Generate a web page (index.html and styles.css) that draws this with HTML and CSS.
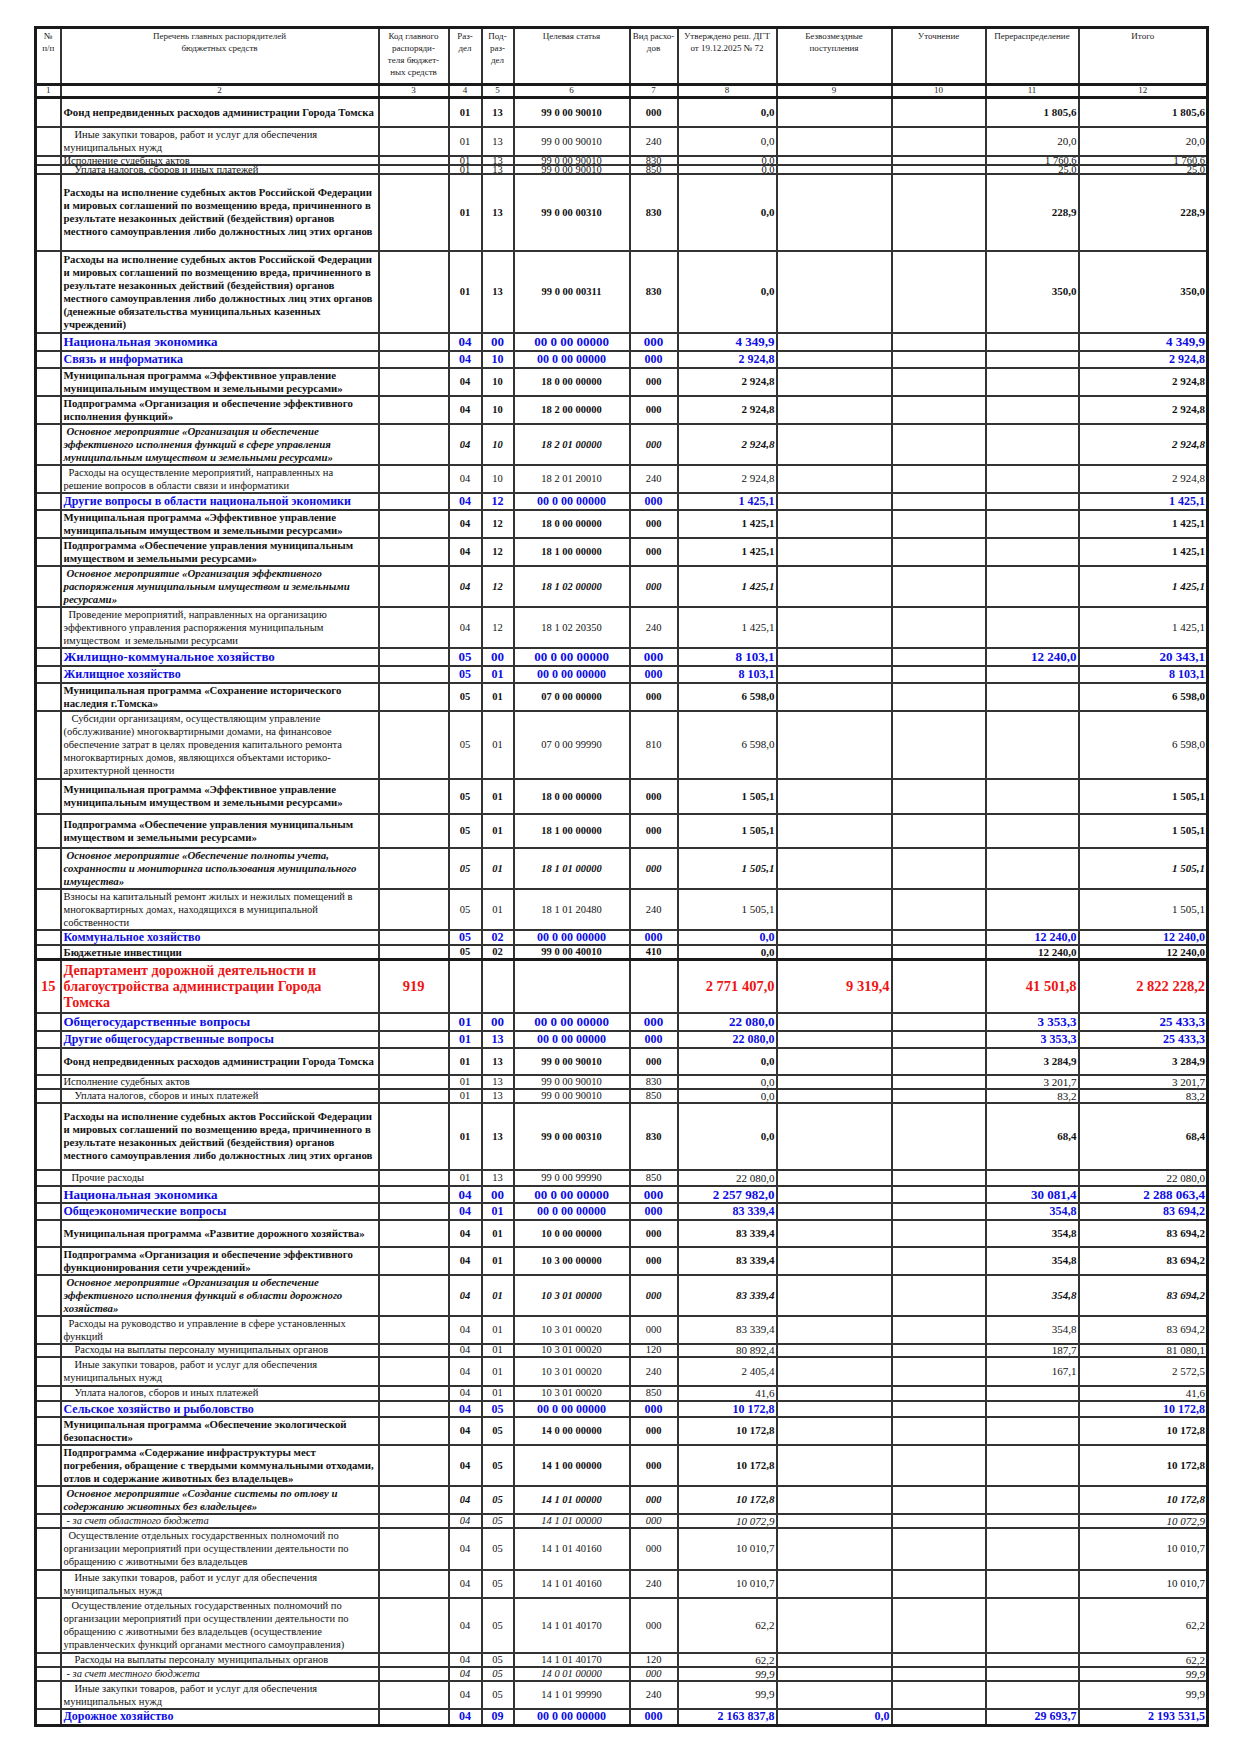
FILE: index.html
```html
<!DOCTYPE html>
<html lang="ru">
<head>
<meta charset="utf-8">
<title>Ведомственная структура расходов</title>
<link rel="stylesheet" href="styles.css">
</head>
<body>
<table class="budget">
<colgroup>
<col class="c1"><col class="c2"><col class="c3"><col class="c4"><col class="c5"><col class="c6"><col class="c7"><col class="c8"><col class="c9"><col class="c10"><col class="c11"><col class="c12">
</colgroup>
<thead>
<tr class="head">
<th>№<br>п/п</th>
<th>Перечень главных распорядителей<br>бюджетных средств</th>
<th>Код главного<br>распоряди-<br>теля бюджет-<br>ных средств</th>
<th>Раз-<br>дел</th>
<th>Под-<br>раз-<br>дел</th>
<th>Целевая статья</th>
<th>Вид расхо-<br>дов</th>
<th>Утверждено реш. ДГТ<br>от 19.12.2025 № 72</th>
<th>Безвозмездные<br>поступления</th>
<th>Уточнение</th>
<th>Перераспределение</th>
<th>Итого</th>
</tr>
<tr class="nums">
<th>1</th><th>2</th><th>3</th><th>4</th><th>5</th><th>6</th><th>7</th><th>8</th><th>9</th><th>10</th><th>11</th><th>12</th>
</tr>
</thead>
<tbody>
<tr class="b h29"><td></td><td>Фонд непредвиденных расходов администрации Города Томска</td><td></td><td>01</td><td>13</td><td>99 0 00 90010</td><td>000</td><td>0,0</td><td></td><td></td><td>1 805,6</td><td>1 805,6</td></tr>
<tr class="h29"><td></td><td class="i3">Иные закупки товаров, работ и услуг для обеспечения<br>муниципальных нужд</td><td></td><td>01</td><td>13</td><td>99 0 00 90010</td><td>240</td><td>0,0</td><td></td><td></td><td>20,0</td><td>20,0</td></tr>
<tr class="h9"><td></td><td>Исполнение судебных актов</td><td></td><td>01</td><td>13</td><td>99 0 00 90010</td><td>830</td><td>0,0</td><td></td><td></td><td>1 760,6</td><td>1 760,6</td></tr>
<tr class="h9"><td></td><td class="i3">Уплата налогов, сборов и иных платежей</td><td></td><td>01</td><td>13</td><td>99 0 00 90010</td><td>850</td><td>0,0</td><td></td><td></td><td>25,0</td><td>25,0</td></tr>
<tr class="b h77"><td></td><td>Расходы на исполнение судебных актов Российской Федерации<br>и мировых соглашений по возмещению вреда, причиненного в<br>результате незаконных действий (бездействия) органов<br>местного самоуправления либо должностных лиц этих органов</td><td></td><td>01</td><td>13</td><td>99 0 00 00310</td><td>830</td><td>0,0</td><td></td><td></td><td>228,9</td><td>228,9</td></tr>
<tr class="b h82"><td></td><td>Расходы на исполнение судебных актов Российской Федерации<br>и мировых соглашений по возмещению вреда, причиненного в<br>результате незаконных действий (бездействия) органов<br>местного самоуправления либо должностных лиц этих органов<br>(денежные обязательства муниципальных казенных<br>учреждений)</td><td></td><td>01</td><td>13</td><td>99 0 00 00311</td><td>830</td><td>0,0</td><td></td><td></td><td>350,0</td><td>350,0</td></tr>
<tr class="blue big h18"><td></td><td>Национальная экономика</td><td></td><td>04</td><td>00</td><td>00 0 00 00000</td><td>000</td><td>4 349,9</td><td></td><td></td><td></td><td>4 349,9</td></tr>
<tr class="blue h17"><td></td><td>Связь и информатика</td><td></td><td>04</td><td>10</td><td>00 0 00 00000</td><td>000</td><td>2 924,8</td><td></td><td></td><td></td><td>2 924,8</td></tr>
<tr class="b h28"><td></td><td>Муниципальная программа «Эффективное управление<br>муниципальным имуществом и земельными ресурсами»</td><td></td><td>04</td><td>10</td><td>18 0 00 00000</td><td>000</td><td>2 924,8</td><td></td><td></td><td></td><td>2 924,8</td></tr>
<tr class="b h27"><td></td><td>Подпрограмма «Организация и обеспечение эффективного<br>исполнения функций»</td><td></td><td>04</td><td>10</td><td>18 2 00 00000</td><td>000</td><td>2 924,8</td><td></td><td></td><td></td><td>2 924,8</td></tr>
<tr class="bi h41"><td></td><td class="i1">Основное мероприятие «Организация и обеспечение<br>эффективного исполнения функций в сфере управления<br>муниципальным имуществом и земельными ресурсами»</td><td></td><td>04</td><td>10</td><td>18 2 01 00000</td><td>000</td><td>2 924,8</td><td></td><td></td><td></td><td>2 924,8</td></tr>
<tr class="h27"><td></td><td class="i2">Расходы на осуществление мероприятий, направленных на<br>решение вопросов в области связи и информатики</td><td></td><td>04</td><td>10</td><td>18 2 01 20010</td><td>240</td><td>2 924,8</td><td></td><td></td><td></td><td>2 924,8</td></tr>
<tr class="blue h17"><td></td><td>Другие вопросы в области национальной экономики</td><td></td><td>04</td><td>12</td><td>00 0 00 00000</td><td>000</td><td>1 425,1</td><td></td><td></td><td></td><td>1 425,1</td></tr>
<tr class="b h28"><td></td><td>Муниципальная программа «Эффективное управление<br>муниципальным имуществом и земельными ресурсами»</td><td></td><td>04</td><td>12</td><td>18 0 00 00000</td><td>000</td><td>1 425,1</td><td></td><td></td><td></td><td>1 425,1</td></tr>
<tr class="b h27"><td></td><td>Подпрограмма «Обеспечение управления муниципальным<br>имуществом и земельными ресурсами»</td><td></td><td>04</td><td>12</td><td>18 1 00 00000</td><td>000</td><td>1 425,1</td><td></td><td></td><td></td><td>1 425,1</td></tr>
<tr class="bi h41"><td></td><td class="i1">Основное мероприятие «Организация эффективного<br>распоряжения муниципальным имуществом и земельными<br>ресурсами»</td><td></td><td>04</td><td>12</td><td>18 1 02 00000</td><td>000</td><td>1 425,1</td><td></td><td></td><td></td><td>1 425,1</td></tr>
<tr class="h41"><td></td><td class="i2">Проведение мероприятий, направленных на организацию<br>эффективного управления распоряжения муниципальным<br>имуществом &nbsp;и земельными ресурсами</td><td></td><td>04</td><td>12</td><td>18 1 02 20350</td><td>240</td><td>1 425,1</td><td></td><td></td><td></td><td>1 425,1</td></tr>
<tr class="blue big h18"><td></td><td>Жилищно-коммунальное хозяйство</td><td></td><td>05</td><td>00</td><td>00 0 00 00000</td><td>000</td><td>8 103,1</td><td></td><td></td><td>12 240,0</td><td>20 343,1</td></tr>
<tr class="blue h17"><td></td><td>Жилищное хозяйство</td><td></td><td>05</td><td>01</td><td>00 0 00 00000</td><td>000</td><td>8 103,1</td><td></td><td></td><td></td><td>8 103,1</td></tr>
<tr class="b h27"><td></td><td>Муниципальная программа «Сохранение исторического<br>наследия г.Томска»</td><td></td><td>05</td><td>01</td><td>07 0 00 00000</td><td>000</td><td>6 598,0</td><td></td><td></td><td></td><td>6 598,0</td></tr>
<tr class="h68"><td></td><td class="i25">Субсидии организациям, осуществляющим управление<br>(обслуживание) многоквартирными домами, на финансовое<br>обеспечение затрат в целях проведения капитального ремонта<br>многоквартирных домов, являющихся объектами историко-<br>архитектурной ценности</td><td></td><td>05</td><td>01</td><td>07 0 00 99990</td><td>810</td><td>6 598,0</td><td></td><td></td><td></td><td>6 598,0</td></tr>
<tr class="b h35"><td></td><td>Муниципальная программа «Эффективное управление<br>муниципальным имуществом и земельными ресурсами»</td><td></td><td>05</td><td>01</td><td>18 0 00 00000</td><td>000</td><td>1 505,1</td><td></td><td></td><td></td><td>1 505,1</td></tr>
<tr class="b h34"><td></td><td>Подпрограмма «Обеспечение управления муниципальным<br>имуществом и земельными ресурсами»</td><td></td><td>05</td><td>01</td><td>18 1 00 00000</td><td>000</td><td>1 505,1</td><td></td><td></td><td></td><td>1 505,1</td></tr>
<tr class="bi h40"><td></td><td class="i1">Основное мероприятие «Обеспечение полноты учета,<br>сохранности и мониторинга использования муниципального<br>имущества»</td><td></td><td>05</td><td>01</td><td>18 1 01 00000</td><td>000</td><td>1 505,1</td><td></td><td></td><td></td><td>1 505,1</td></tr>
<tr class="h41"><td></td><td>Взносы на капитальный ремонт жилых и нежилых помещений в<br>многоквартирных домах, находящихся в муниципальной<br>собственности</td><td></td><td>05</td><td>01</td><td>18 1 01 20480</td><td>240</td><td>1 505,1</td><td></td><td></td><td></td><td>1 505,1</td></tr>
<tr class="blue h15"><td></td><td>Коммунальное хозяйство</td><td></td><td>05</td><td>02</td><td>00 0 00 00000</td><td>000</td><td>0,0</td><td></td><td></td><td>12 240,0</td><td>12 240,0</td></tr>
<tr class="b h15"><td></td><td>Бюджетные инвестиции</td><td></td><td>05</td><td>02</td><td>99 0 00 40010</td><td>410</td><td>0,0</td><td></td><td></td><td>12 240,0</td><td>12 240,0</td></tr>
<tr class="red dept h53"><td>15</td><td>Департамент дорожной деятельности и<br>благоустройства администрации Города<br>Томска</td><td>919</td><td></td><td></td><td></td><td></td><td>2 771 407,0</td><td>9 319,4</td><td></td><td>41 501,8</td><td>2 822 228,2</td></tr>
<tr class="blue big h18"><td></td><td>Общегосударственные вопросы</td><td></td><td>01</td><td>00</td><td>00 0 00 00000</td><td>000</td><td>22 080,0</td><td></td><td></td><td>3 353,3</td><td>25 433,3</td></tr>
<tr class="blue h17"><td></td><td>Другие общегосударственные вопросы</td><td></td><td>01</td><td>13</td><td>00 0 00 00000</td><td>000</td><td>22 080,0</td><td></td><td></td><td>3 353,3</td><td>25 433,3</td></tr>
<tr class="b h27"><td></td><td>Фонд непредвиденных расходов администрации Города Томска</td><td></td><td>01</td><td>13</td><td>99 0 00 90010</td><td>000</td><td>0,0</td><td></td><td></td><td>3 284,9</td><td>3 284,9</td></tr>
<tr class="h14"><td></td><td>Исполнение судебных актов</td><td></td><td>01</td><td>13</td><td>99 0 00 90010</td><td>830</td><td>0,0</td><td></td><td></td><td>3 201,7</td><td>3 201,7</td></tr>
<tr class="h14"><td></td><td class="i3">Уплата налогов, сборов и иных платежей</td><td></td><td>01</td><td>13</td><td>99 0 00 90010</td><td>850</td><td>0,0</td><td></td><td></td><td>83,2</td><td>83,2</td></tr>
<tr class="b h67"><td></td><td>Расходы на исполнение судебных актов Российской Федерации<br>и мировых соглашений по возмещению вреда, причиненного в<br>результате незаконных действий (бездействия) органов<br>местного самоуправления либо должностных лиц этих органов</td><td></td><td>01</td><td>13</td><td>99 0 00 00310</td><td>830</td><td>0,0</td><td></td><td></td><td>68,4</td><td>68,4</td></tr>
<tr class="h16"><td></td><td class="i25">Прочие расходы</td><td></td><td>01</td><td>13</td><td>99 0 00 99990</td><td>850</td><td>22 080,0</td><td></td><td></td><td></td><td>22 080,0</td></tr>
<tr class="blue big h17"><td></td><td>Национальная экономика</td><td></td><td>04</td><td>00</td><td>00 0 00 00000</td><td>000</td><td>2 257 982,0</td><td></td><td></td><td>30 081,4</td><td>2 288 063,4</td></tr>
<tr class="blue h17"><td></td><td>Общеэкономические вопросы</td><td></td><td>04</td><td>01</td><td>00 0 00 00000</td><td>000</td><td>83 339,4</td><td></td><td></td><td>354,8</td><td>83 694,2</td></tr>
<tr class="b h27"><td></td><td>Муниципальная программа «Развитие дорожного хозяйства»</td><td></td><td>04</td><td>01</td><td>10 0 00 00000</td><td>000</td><td>83 339,4</td><td></td><td></td><td>354,8</td><td>83 694,2</td></tr>
<tr class="b h28"><td></td><td>Подпрограмма «Организация и обеспечение эффективного<br>функционирования сети учреждений»</td><td></td><td>04</td><td>01</td><td>10 3 00 00000</td><td>000</td><td>83 339,4</td><td></td><td></td><td>354,8</td><td>83 694,2</td></tr>
<tr class="bi h41"><td></td><td class="i1">Основное мероприятие «Организация и обеспечение<br>эффективного исполнения функций в области дорожного<br>хозяйства»</td><td></td><td>04</td><td>01</td><td>10 3 01 00000</td><td>000</td><td>83 339,4</td><td></td><td></td><td>354,8</td><td>83 694,2</td></tr>
<tr class="h27"><td></td><td class="i2">Расходы на руководство и управление в сфере установленных<br>функций</td><td></td><td>04</td><td>01</td><td>10 3 01 00020</td><td>000</td><td>83 339,4</td><td></td><td></td><td>354,8</td><td>83 694,2</td></tr>
<tr class="h13"><td></td><td class="i3">Расходы на выплаты персоналу муниципальных органов</td><td></td><td>04</td><td>01</td><td>10 3 01 00020</td><td>120</td><td>80 892,4</td><td></td><td></td><td>187,7</td><td>81 080,1</td></tr>
<tr class="h29"><td></td><td class="i3">Иные закупки товаров, работ и услуг для обеспечения<br>муниципальных нужд</td><td></td><td>04</td><td>01</td><td>10 3 01 00020</td><td>240</td><td>2 405,4</td><td></td><td></td><td>167,1</td><td>2 572,5</td></tr>
<tr class="h15"><td></td><td class="i3">Уплата налогов, сборов и иных платежей</td><td></td><td>04</td><td>01</td><td>10 3 01 00020</td><td>850</td><td>41,6</td><td></td><td></td><td></td><td>41,6</td></tr>
<tr class="blue h16"><td></td><td>Сельское хозяйство и рыболовство</td><td></td><td>04</td><td>05</td><td>00 0 00 00000</td><td>000</td><td>10 172,8</td><td></td><td></td><td></td><td>10 172,8</td></tr>
<tr class="b h27"><td></td><td>Муниципальная программа «Обеспечение экологической<br>безопасности»</td><td></td><td>04</td><td>05</td><td>14 0 00 00000</td><td>000</td><td>10 172,8</td><td></td><td></td><td></td><td>10 172,8</td></tr>
<tr class="b h41"><td></td><td>Подпрограмма «Содержание инфраструктуры мест<br>погребения, обращение с твердыми коммунальными отходами,<br>отлов и содержание животных без владельцев»</td><td></td><td>04</td><td>05</td><td>14 1 00 00000</td><td>000</td><td>10 172,8</td><td></td><td></td><td></td><td>10 172,8</td></tr>
<tr class="bi h27"><td></td><td class="i1">Основное мероприятие «Создание системы по отлову и<br>содержанию животных без владельцев»</td><td></td><td>04</td><td>05</td><td>14 1 01 00000</td><td>000</td><td>10 172,8</td><td></td><td></td><td></td><td>10 172,8</td></tr>
<tr class="it h14"><td></td><td class="i1">- за счет областного бюджета</td><td></td><td>04</td><td>05</td><td>14 1 01 00000</td><td>000</td><td>10 072,9</td><td></td><td></td><td></td><td>10 072,9</td></tr>
<tr class="h42"><td></td><td class="i2">Осуществление отдельных государственных полномочий по<br>организации мероприятий при осуществлении деятельности по<br>обращению с животными без владельцев</td><td></td><td>04</td><td>05</td><td>14 1 01 40160</td><td>000</td><td>10 010,7</td><td></td><td></td><td></td><td>10 010,7</td></tr>
<tr class="h27"><td></td><td class="i3">Иные закупки товаров, работ и услуг для обеспечения<br>муниципальных нужд</td><td></td><td>04</td><td>05</td><td>14 1 01 40160</td><td>240</td><td>10 010,7</td><td></td><td></td><td></td><td>10 010,7</td></tr>
<tr class="h55"><td></td><td class="i25">Осуществление отдельных государственных полномочий по<br>организации мероприятий при осуществлении деятельности по<br>обращению с животными без владельцев (осуществление<br>управленческих функций органами местного самоуправления)</td><td></td><td>04</td><td>05</td><td>14 1 01 40170</td><td>000</td><td>62,2</td><td></td><td></td><td></td><td>62,2</td></tr>
<tr class="h14"><td></td><td class="i3">Расходы на выплаты персоналу муниципальных органов</td><td></td><td>04</td><td>05</td><td>14 1 01 40170</td><td>120</td><td>62,2</td><td></td><td></td><td></td><td>62,2</td></tr>
<tr class="it h14"><td></td><td class="i1">- за счет местного бюджета</td><td></td><td>04</td><td>05</td><td>14 0 01 00000</td><td>000</td><td>99,9</td><td></td><td></td><td></td><td>99,9</td></tr>
<tr class="h27"><td></td><td class="i3">Иные закупки товаров, работ и услуг для обеспечения<br>муниципальных нужд</td><td></td><td>04</td><td>05</td><td>14 1 01 99990</td><td>240</td><td>99,9</td><td></td><td></td><td></td><td>99,9</td></tr>
<tr class="blue h17"><td></td><td>Дорожное хозяйство</td><td></td><td>04</td><td>09</td><td>00 0 00 00000</td><td>000</td><td>2 163 837,8</td><td>0,0</td><td></td><td>29 693,7</td><td>2 193 531,5</td></tr>
</tbody>
</table>
</body>
</html>
```

FILE: styles.css
```css
html, body {
  margin: 0;
  background: #ffffff;
}
body {
  padding: 26px 0 0 34px;
  font-family: "Liberation Serif", "Times New Roman", serif;
  color: #111111;
}
.budget {
  border-collapse: collapse;
  table-layout: fixed;
  width: 1172px;
  border: 3px solid #1a1a1a;
}
.c1 { width: 25px; }
.c2 { width: 318px; }
.c3 { width: 70px; }
.c4 { width: 33px; }
.c5 { width: 32px; }
.c6 { width: 116px; }
.c7 { width: 48px; }
.c8 { width: 99px; }
.c9 { width: 115px; }
.c10 { width: 94px; }
.c11 { width: 93px; }
.c12 { width: 129px; }

.budget th,
.budget td {
  border: 2px solid #333333;
  padding: 0 2px;
  white-space: nowrap;
  overflow: hidden;
}
.budget th {
  font-weight: normal;
  font-size: 9px;
  line-height: 12px;
  vertical-align: top;
  text-align: center;
  color: #222;
}
.head { height: 57px; }
.head th { padding-top: 1px; border-bottom: 3px solid #1a1a1a; }
.nums { height: 13px; }
.nums th { line-height: 9px; padding-top: 0; border-bottom: 3px solid #1a1a1a; }

.budget td {
  font-size: 10.5px;
  line-height: 13px;
  vertical-align: middle;
  text-align: center;
}
.budget td:nth-child(2) { text-align: left; }
.budget td:nth-child(n+8) { text-align: right; padding-right: 1px; font-size: 11px; }

.i1 { text-indent: 3px; }
.i2 { text-indent: 5px; }
.i25 { text-indent: 8px; }
.i3 { text-indent: 11px; }

.b td, .bi td { font-weight: bold; }
.bi td { font-style: italic; }
.b td:nth-child(2), .bi td:nth-child(2) { font-size: 10.8px; }
.it td { font-style: italic; }

.blue td,
.blue td:nth-child(n+8) { color: #0d0de6; font-weight: bold; font-size: 12px; }
.blue.big td,
.blue.big td:nth-child(n+8) { font-size: 13px; }

.red td,
.red td:nth-child(n+8) { color: #ee1515; font-weight: bold; font-size: 14.5px; line-height: 16px; }
.red td:nth-child(2) { font-size: 14.2px; }
.dept td { border-top: 3px solid #1a1a1a; }

.h9 { height: 9px; }
.budget .h9 td { line-height: 7px; overflow: visible; }
.budget .h9 td:nth-child(n+8) { font-size: 10.5px; }
.h13 { height: 13px; }
.h14 { height: 14px; }
.h13 td, .h14 td { line-height: 10px; }
.h15 { height: 15px; }
.h16 { height: 16px; }
.h15 td, .h16 td { line-height: 12px; }
.h17 { height: 17px; }
.h18 { height: 18px; }
.h17 td, .h18 td { line-height: 13px; }
.h27 { height: 27px; }
.h28 { height: 28px; }
.h29 { height: 29px; }
.h34 { height: 34px; }
.h35 { height: 35px; }
.h40 { height: 40px; }
.h41 { height: 41px; }
.h42 { height: 42px; }
.h53 { height: 53px; }
.h55 { height: 55px; }
.h67 { height: 67px; }
.h68 { height: 68px; }
.h77 { height: 77px; }
.h82 { height: 82px; }
```
